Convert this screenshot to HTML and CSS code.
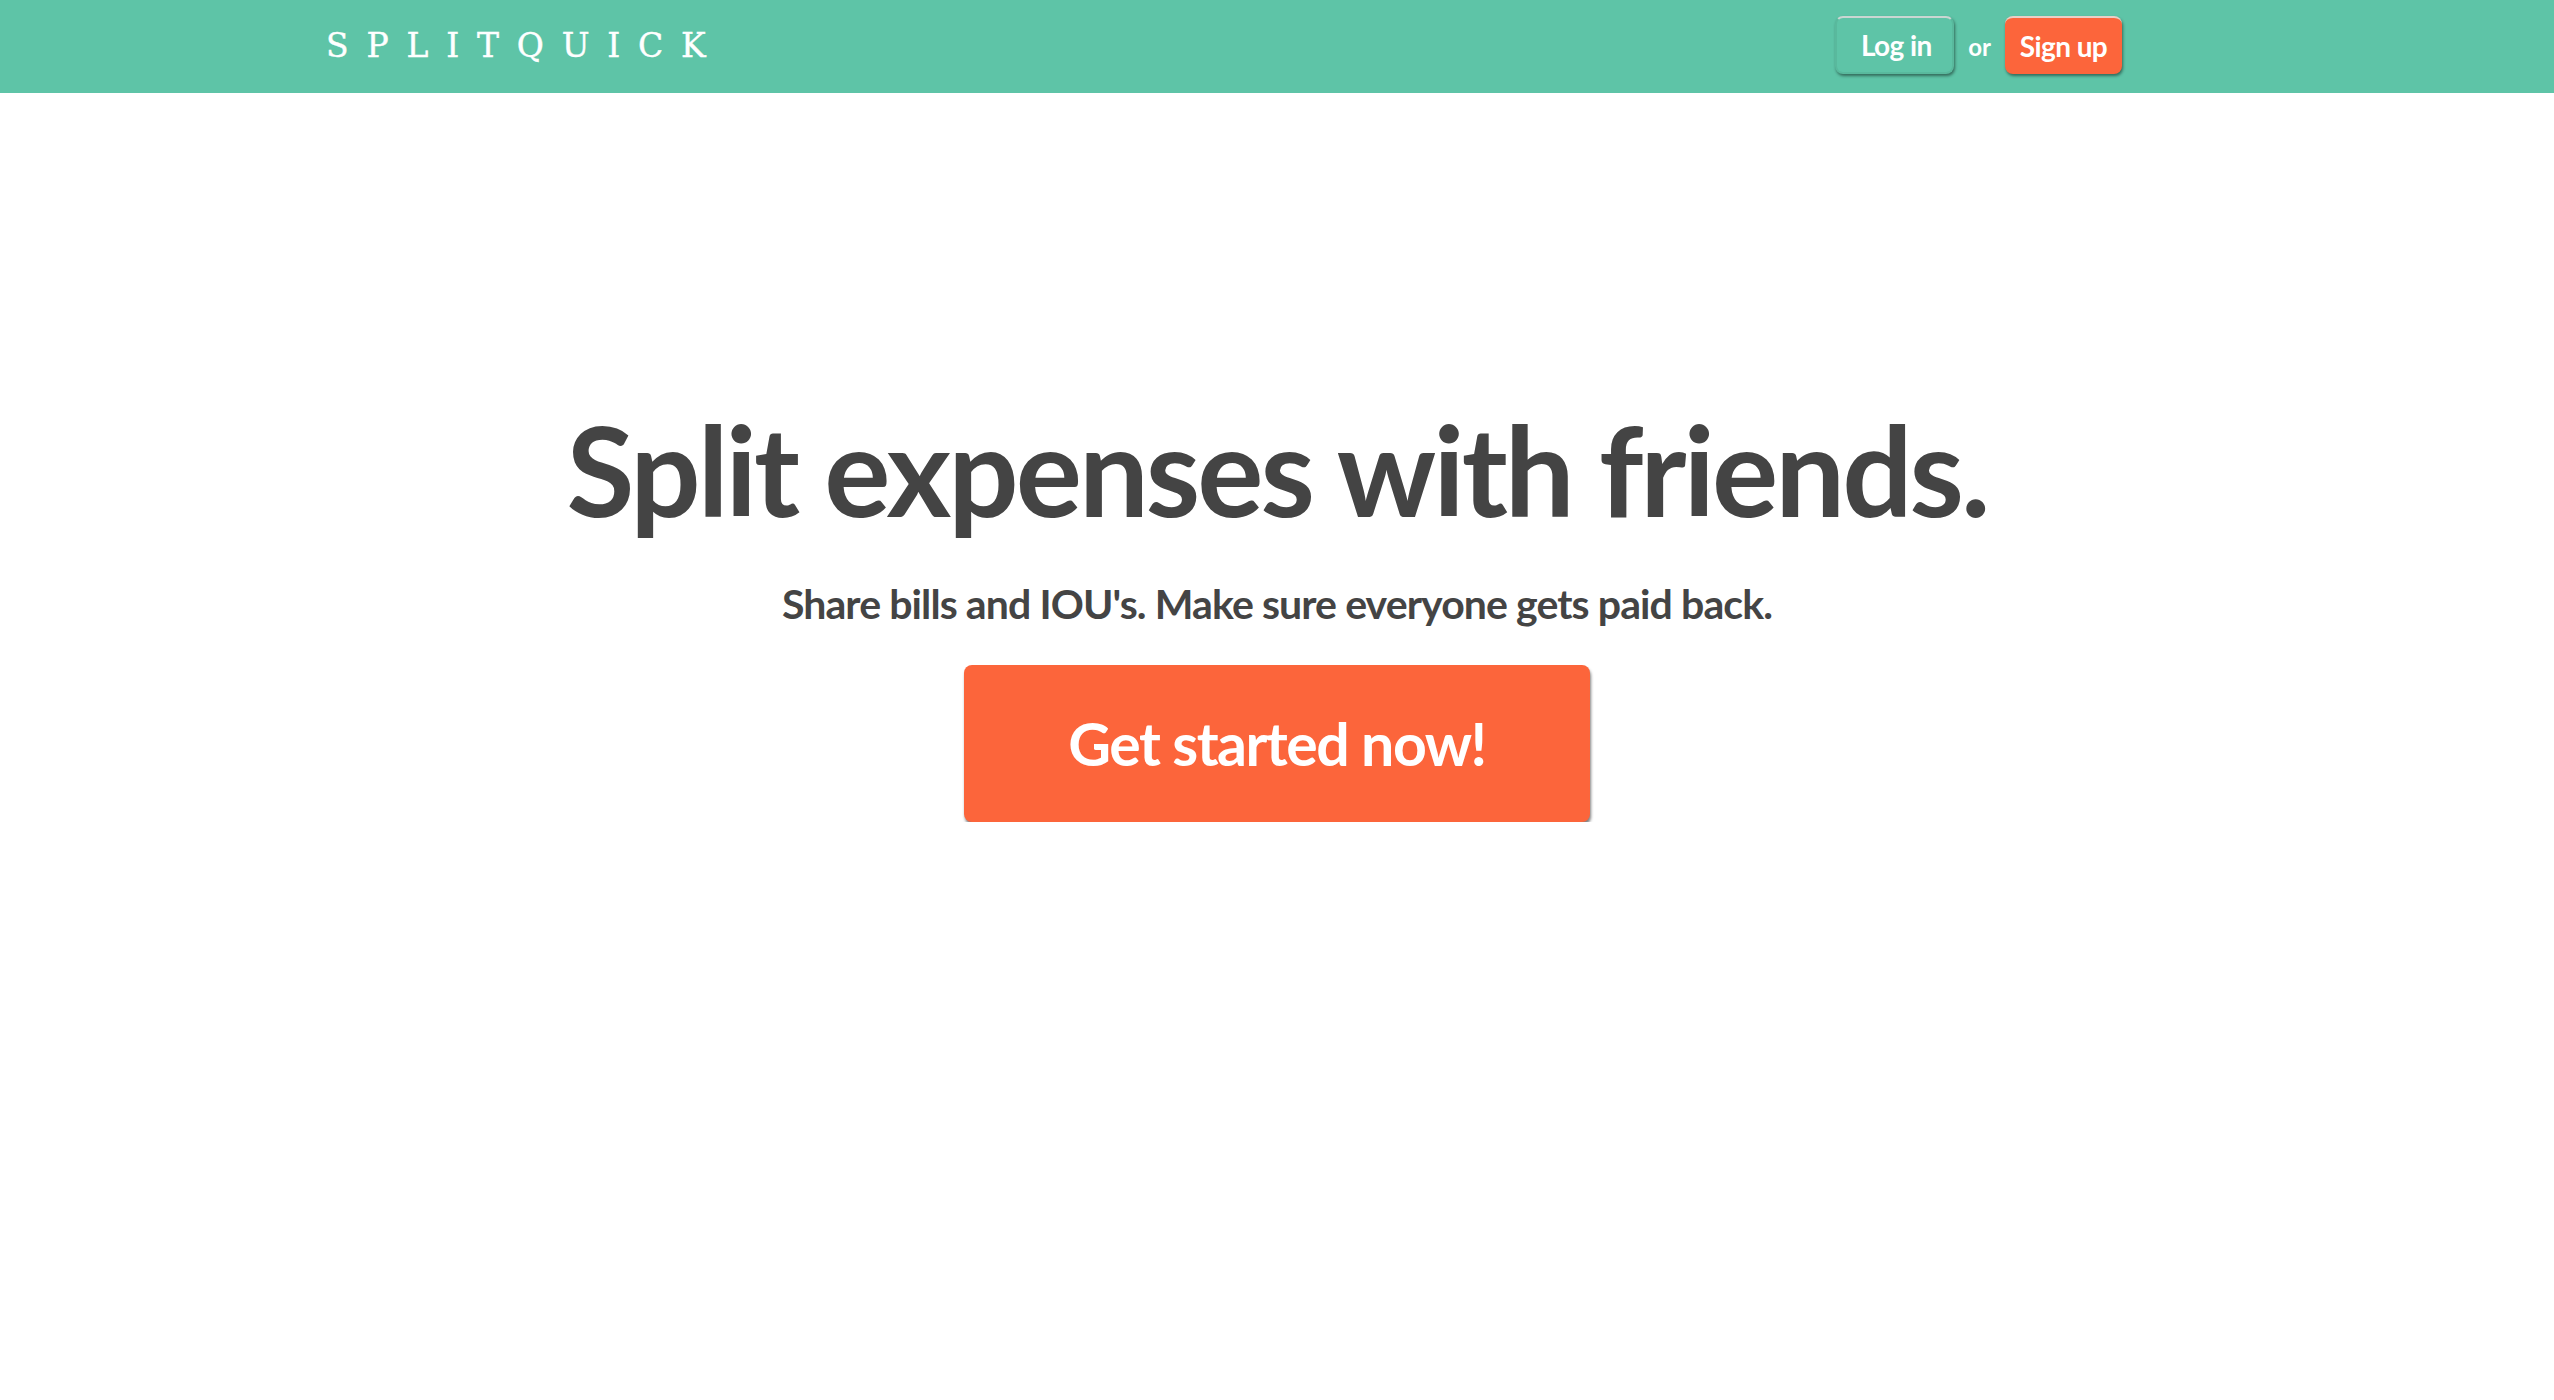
FILE: index.html
```html
<!DOCTYPE html>
<html lang="en">
<head>
<meta charset="utf-8">
<title>SplitQuick</title>
<link rel="stylesheet" href="styles.css">
</head>
<body>
<header class="topbar">
  <div class="topbar-inner">
    <a class="logo" href="#">SPLITQUICK</a>
    <nav class="auth">
      <a class="btn btn-login" href="#">Log in</a>
      <span class="or">or</span>
      <a class="btn btn-signup" href="#">Sign up</a>
    </nav>
  </div>
</header>
<main class="hero">
  <h1 class="hero-title">Split expenses with friends.</h1>
  <p class="hero-sub">Share bills and IOU's. Make sure everyone gets paid back.</p>
  <a class="btn-cta" href="#">Get started now!</a>
</main>
</body>
</html>
```
FILE: styles.css
```css
* { box-sizing: border-box; }
html, body { margin: 0; padding: 0; background: #fff; }
body { font-family: Lato, "Open Sans", sans-serif; color: #444; }
a { text-decoration: none; }

.topbar {
  background: #5ec4a7;
  height: 93px;
}
.topbar-inner {
  height: 100%;
  display: flex;
  align-items: center;
  justify-content: space-between;
  padding: 0 432px 0 326px;
}
.logo {
  font-family: "DejaVu Serif", serif;
  font-size: 33px;
  letter-spacing: 17.8px;
  color: #fff;
  line-height: 1;
  -webkit-text-stroke: 0.4px #fff;
  margin-top: -2px;
}
.auth {
  display: flex;
  align-items: center;
  gap: 12px;
  margin-top: -4px;
}
.btn {
  display: inline-flex;
  align-items: center;
  justify-content: center;
  height: 58px;
  border-radius: 8px;
  color: #fff;
  font-weight: 700;
  font-size: 28px;
  letter-spacing: -0.6px;
  box-shadow: 1px 2px 3px rgba(0,0,0,0.45);
}
.btn-login {
  width: 119px;
  background: #5ec4a7;
  border: 2px solid #59b99d;
  border-top-color: #c9d6d2;
  padding-left: 3px;
}
.btn-signup {
  width: 117px;
  background: #fc653b;
  border-top: 2px solid #e9cfc6;
}
.or {
  color: #fff;
  font-weight: 700;
  font-size: 24px;
  margin: 4px 2px 0;
}

.hero {
  display: flex;
  flex-direction: column;
  align-items: center;
  padding-top: 314px;
}
.hero-title {
  margin: 0;
  font-size: 124px;
  font-weight: 700;
  letter-spacing: -3px;
  line-height: 1;
  color: #444;
}
.hero-sub {
  margin: 48px 0 0;
  font-size: 41px;
  line-height: 1.2;
  font-weight: 700;
  letter-spacing: -0.9px;
  color: #444;
}
.btn-cta {
  margin-top: 37px;
  width: 626px;
  height: 157px;
  display: flex;
  align-items: center;
  justify-content: center;
  background: #fc653b;
  color: #fff;
  border-radius: 8px;
  font-size: 59px;
  font-weight: 700;
  letter-spacing: -1.5px;
  box-shadow: 1px 3px 3px rgba(0,0,0,0.5);
}
```
